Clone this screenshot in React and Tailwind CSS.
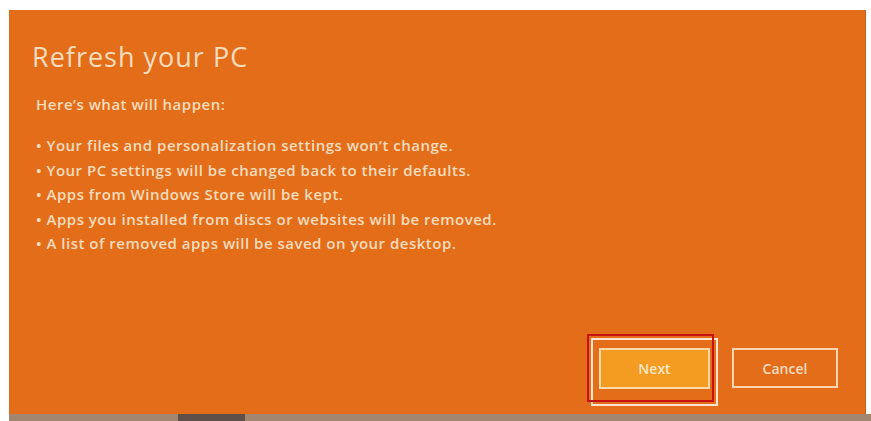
import React from "react";

const bullets = [
  "Your files and personalization settings won\u2019t change.",
  "Your PC settings will be changed back to their defaults.",
  "Apps from Windows Store will be kept.",
  "Apps you installed from discs or websites will be removed.",
  "A list of removed apps will be saved on your desktop.",
];

export default function App() {
  return (
    <div
      className="w-[871px] h-[421px] bg-white flex flex-col overflow-hidden"
      style={{ fontFamily: '"Open Sans", "Noto Sans", sans-serif' }}
    >
      <div className="h-[10px] shrink-0" />

      {/* Dialog panel */}
      <div className="ml-[9px] w-[857px] h-[404px] shrink-0 bg-[#e46d1a] border-r border-[#c8601a] flex flex-col">
        <div className="pl-[23px] pt-[30px]">
          <h1 className="text-[27px] leading-[34px] text-[#f7dcbd] tracking-[1px]">Refresh your PC</h1>
          <p className="mt-[21px] pl-[4px] text-[15px] leading-[18px] font-semibold tracking-[0.5px] text-[#f7dcbd]">
            Here&rsquo;s what will happen:
          </p>
          <ul className="mt-[23px] pl-[4px] flex flex-col gap-[6.5px]">
            {bullets.map((b) => (
              <li key={b} className="text-[15px] leading-[18px] font-semibold tracking-[0.5px] text-[#f7dcbd]">
                &bull; {b}
              </li>
            ))}
          </ul>
        </div>

        {/* Buttons */}
        <div className="mt-auto mb-[12px] flex justify-end items-center gap-[18px] pr-[27px]">
          <div className="relative">
            <div className="absolute left-[4px] top-[4px] w-[127px] h-[68px] border-2 border-[#fbe3cf]" />
            <div className="relative w-[127px] h-[68px] border-2 border-[#c81212] flex items-center justify-end pr-[2px]">
              <button className="w-[111px] h-[41px] bg-[#f49b22] border-2 border-[#fbd9a8] text-[14px] font-semibold text-[#fde6c4]">
                Next
              </button>
            </div>
          </div>
          <button className="w-[106px] h-[40px] border-2 border-[#f8d4b0] text-[14px] font-semibold text-[#f8dcc0]">
            Cancel
          </button>
        </div>
      </div>

      {/* Taskbar strip */}
      <div className="h-[7px] shrink-0 ml-[9px] flex bg-[#a38670]">
        <div className="w-[169px]" />
        <div className="w-[67px] bg-[#5f514a]" />
      </div>
    </div>
  );
}
